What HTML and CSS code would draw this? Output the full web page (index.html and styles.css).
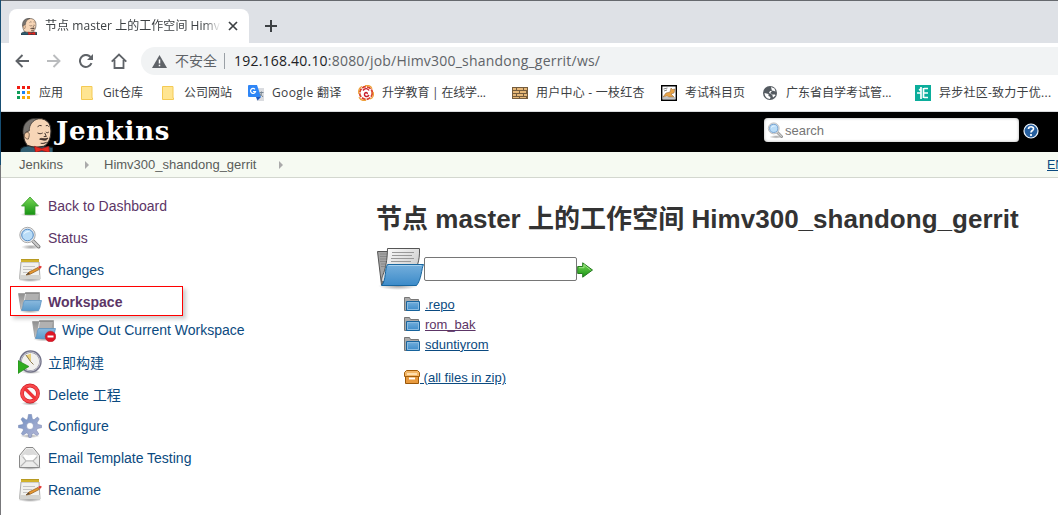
FILE: index.html
```
<!DOCTYPE html>
<html lang="zh-CN">
<head>
<meta charset="utf-8">
<title>节点 master 上的工作空间 Himv300_shandong_gerrit</title>
<link rel="stylesheet" href="styles.css">
</head>
<body>
<svg width="0" height="0" class="defs">
  <defs>
    <linearGradient id="gGreen" x2="0" y2="1"><stop stop-color="#7ad957"/><stop offset="1" stop-color="#179414"/></linearGradient>
    <linearGradient id="gBlue" x2="0" y2="1"><stop stop-color="#75afdc"/><stop offset="1" stop-color="#3c8bc9"/></linearGradient>
    <linearGradient id="gSoftBlue" x2="0" y2="1"><stop stop-color="#8ab9de"/><stop offset="1" stop-color="#5c9ccc"/></linearGradient>
    <linearGradient id="gGray" x2="0" y2="1"><stop stop-color="#8c8c8c"/><stop offset="1" stop-color="#c4c4c4"/></linearGradient>
    <linearGradient id="gPaper" x2="1" y2="1"><stop stop-color="#fff"/><stop offset="1" stop-color="#bdbdbd"/></linearGradient>
    <linearGradient id="gGear" x2="1" y2="1"><stop stop-color="#6d8ec2"/><stop offset="1" stop-color="#b9b9d6"/></linearGradient>
    <radialGradient id="gShade"><stop stop-color="#777" stop-opacity=".7"/><stop offset="1" stop-color="#777" stop-opacity="0"/></radialGradient>
    <symbol id="butler" viewBox="0 0 32 34">
      <path d="M0 34c0-4 1-5 6-6l8-2 10 2 8 1v5z" fill="#315d70" stroke="#111b20"/>
      <path d="M7 27C4 23 3 18 4 14l2-6C9 2 14 1 20 1c7 1 10 6 10 12 0 7-2 12-7 15-5 1-12 1-16-1z" fill="#f7d6b7" stroke="#332d29"/>
      <path d="M3 16C2 8 6 2 13 1l5 0C12 3 9 7 9 13l-3 1-1 4z" fill="#77736f" stroke="#302e2d" stroke-width=".7"/>
      <path d="M5 15c4-2 5 1 3 6-3 0-5-3-3-6z" fill="#efc7a3" stroke="#4b3b31" stroke-width=".7"/>
      <path d="M17 9q2-2 4-1M25 8q2-1 3 1M17 15c2 1 3 1 5 0M25 14c1 1 2 1 3 0M24 15l1.500 3.500h-2.500" fill="none" stroke="#3a2c26" stroke-width=".9"/>
      <path d="M19 21c2-2 4 1 8-1-1 3-4 2-8 1zM20 25q3 1 6-1" fill="#4e3b33" stroke="#3a2c26" stroke-width=".8"/>
      <path d="M14 28l7 2 7-2 .5 6-7.500-2-6 2z" fill="#e8281f" stroke="#8e1916" stroke-width=".7"/>
    </symbol>
    <symbol id="magnifier" viewBox="0 0 24 24">
      <ellipse cx="13" cy="21" rx="10" ry="2.5" fill="url(#gShade)"/>
      <path d="M14.5 14.5l6.2 6.2" stroke="#777" stroke-width="3.6" stroke-linecap="round"/><path d="M15 15l5.5 5.5" stroke="#ccc" stroke-width="2" stroke-linecap="round"/>
      <circle cx="9.5" cy="9" r="7.7" fill="#eee" stroke="#aaa"/><circle cx="9.5" cy="9" r="5.8" fill="#b9dcf7" stroke="#4f88c4"/><path d="M5.3 9c1-4 5-5 7-3-4 0-5 1-7 3z" fill="#e8f5ff"/>
    </symbol>
    <symbol id="notepad" viewBox="0 0 24 24">
      <ellipse cx="12" cy="22" rx="12" ry="2" fill="url(#gShade)"/>
      <path d="M3 4h18l1 17H1.500z" fill="#f1f1ee" stroke="#aaa"/><path d="M2 17h20v4H1.500z" fill="#d4d4d0"/>
      <path d="M3 1h18v3H3z" fill="#d2b32c"/><path d="M3.500 1.500h17" stroke="#9c8118" stroke-dasharray="1 1"/>
      <path d="M5 8.500h12M5 11.500h9M5 14.500h6" stroke="#c4c4c4"/>
      <path d="M8 17l3-3 9-4.500 1.500 1.800-9.500 5z" fill="#e89a32" stroke="#8f5514" stroke-width=".7"/><path d="M8 17l3-2.500.8 1.500z" fill="#444"/><path d="M20 9l2-1.300 2 1-2 2.300z" fill="#e33b35"/>
    </symbol>
    <symbol id="folder" viewBox="0 0 48 42">
      <ellipse cx="21" cy="38" rx="20" ry="4" fill="url(#gShade)"/>
      <path d="M.5 3.500h12v20L4.500 37z" fill="#a4a4a4" stroke="#555"/><path d="M3 6h8M3 8.500h8M3 11h8M3 13.500h7M4 16h6M4 18.500h5" stroke="#888"/>
      <path d="M10.500.5h32c.5 13-3 20-7 26L5 34c-2-6 5-8 5.500-33.500z" fill="url(#gPaper)" stroke="#555"/>
      <path d="M15 4.500h22M15 7.500h20M14 10.500h23M14 13.500h20" stroke="#999"/>
      <path d="M10.500 16.500h36c-2 4-2 15-7 21h-35c5-5 3-17 6-21z" fill="url(#gBlue)" stroke="#17669f"/><path d="M11.500 17.500h33" stroke="#a7d0ed"/>
    </symbol>
    <symbol id="folder24" viewBox="0 0 24 24">
      <ellipse cx="12" cy="21" rx="11" ry="2.500" fill="url(#gShade)"/>
      <path d="M.5 3.500h6l1-1h14v10l-3 7H3z" fill="url(#gGray)" stroke="#999" stroke-width=".8"/><path d="M8 4h13l-2 9-13 5z" fill="#b1b1b1"/><path d="M7.500 4L5 19" stroke="#e5e5e5"/>
      <path d="M6.500 10.500h17c-1 3-1 7-3 10H3.500c2-3 1-7 3-10z" fill="url(#gSoftBlue)" stroke="#5a93c1" stroke-width=".8"/>
    </symbol>
    <symbol id="folder16" viewBox="0 0 16 16">
      <path d="M.5 14.500v-13h5l1 2h8v11z" fill="#aaa" stroke="#777"/><path d="M2.500 14.500v-9h13v9z" fill="url(#gBlue)" stroke="#17639c"/><path d="M3.500 13.500v-7h11v7z" fill="none" stroke="#8dbce0"/>
    </symbol>
  </defs>
</svg>
<div class="window">
  <div class="tabstrip">
    <div class="tab">
      <svg class="favicon" width="16" height="17"><use href="#butler"/></svg>
      <span class="tab-title">节点 master 上的工作空间 Himv</span>
      <svg class="close" width="10" height="10" viewBox="0 0 10 10"><path d="M1 1l8 8M9 1L1 9" stroke="#3c4043" stroke-width="1.700"/></svg>
    </div>
    <svg class="new-tab" width="12" height="12" viewBox="0 0 12 12"><path d="M6 0v12M0 6h12" stroke="#3c4043" stroke-width="2"/></svg>
  </div>
  <div class="toolbar">
    <svg width="14" height="14" viewBox="0 0 14 14"><path d="M14 7H1.500M7.500 1l-6 6 6 6" fill="none" stroke="#5f6368" stroke-width="1.900"/></svg>
    <svg width="14" height="14" viewBox="0 0 14 14"><path d="M0 7h12.500M6.500 1l6 6-6 6" fill="none" stroke="#babcbe" stroke-width="1.900"/></svg>
    <svg width="14" height="14" viewBox="0 0 14 14"><path d="M12.500 9.200A6 6 0 1 1 11.500 3" fill="none" stroke="#5f6368" stroke-width="2"/><path d="M14 0v6H8z" fill="#5f6368"/></svg>
    <svg width="16" height="16" viewBox="0 0 16 16"><path d="M.7 8.700L8 1.500l7.300 7.200M3.500 7v8H12.500V7" fill="none" stroke="#5f6368" stroke-width="1.800"/></svg>
    <div class="address">
      <svg width="15" height="13" viewBox="0 0 15 13"><path d="M7.500 0L15 13H0z" fill="#5f6368"/><path d="M7.500 4.500v4M7.500 9.800v1.500" stroke="#fff" stroke-width="1.500"/></svg>
      <span class="insecure">不安全</span><i class="divider"></i>
      <span class="url"><b>192.168.40.10</b>:8080/job/Himv300_shandong_gerrit/ws/</span>
    </div>
  </div>
  <div class="bookmarks">
    <div class="bookmark"><svg width="16" height="16" viewBox="0 0 16 16"><path d="M2 1h3v3H2zM7 1h3v3H7zM12 1h3v3h-3z" fill="#f01d12"/><path d="M2 6h3v3H2zM2 11h3v3H2z" fill="#0f9d58"/><path d="M7 6h3v3H7z" fill="#1a82f7"/><path d="M7 11h3v3H7zM12 6h3v3h-3zM12 11h3v3h-3z" fill="#f9a80b"/></svg><span>应用</span></div>
    <div class="bookmark"><svg width="16" height="16" viewBox="0 0 16 16"><path d="M2.500 1.500h10.500v11.500h.5v1.500h-11z" fill="#ffe591" stroke="#f4ca54"/></svg><span>Git仓库</span></div>
    <div class="bookmark"><svg width="16" height="16" viewBox="0 0 16 16"><path d="M2.500 1.500h10.500v11.500h.5v1.500h-11z" fill="#ffe591" stroke="#f4ca54"/></svg><span>公司网站</span></div>
    <div class="bookmark"><svg width="16" height="16" viewBox="0 0 16 16"><path d="M6 3h10v13H9z" fill="#dadce0"/><path d="M0 1q0-1 1-1h8l4 12H1q-1 0-1-1z" fill="#2f86f6"/><path d="M8 12h5l-3.500 3.500z" fill="#1c57c0"/><path d="M7 4.300A2.500 2.500 0 1 0 7.500 6.500H5" fill="none" stroke="#fff" stroke-width="1.200"/><path d="M11.500 7.500h4M13.500 6.500v1c0 2-1 3-2 4M12 8.500l3 3.500" fill="none" stroke="#788693"/></svg><span class="wide">Google 翻译</span></div>
    <div class="bookmark"><svg width="16" height="16" viewBox="0 0 16 16"><circle cx="8" cy="8" r="6.300" fill="none" stroke="#d9402b" stroke-width="1.800" stroke-dasharray="4 1"/><path d="M7 .8c4-1 6 0 7 3M15 7c1 3 0 6-3 7M8 15.200c-4 1-6-1-7-3M1 9C0 5 1 3 4 1.500" fill="none" stroke="#efa03a" stroke-width="1.300"/><path d="M5 5.500c2-3 5-2 6 0M11 10c-2 3-6 1-4-2 1-1 3 0 2 1" fill="none" stroke="#c91f2e" stroke-width="1.400"/></svg><span class="tight">升学教育 | 在线学...</span></div>
    <div class="bookmark"><svg width="16" height="16" viewBox="0 0 16 16"><path d="M0 2h16v12H0z" fill="#755c3d"/><path d="M1 3h3v2H1zM5 3h6v2H5zM12 3h3v2h-3zM1 6h6v2H1zM8 6h6v2H8zM1 9h3v2H1zM5 9h6v2H5zM12 9h3v2h-3zM1 12h6v1H1zM8 12h6v1H8z" fill="#e5b778"/></svg><span class="loose">用户中心 - 一枝红杏</span></div>
    <div class="bookmark"><svg width="16" height="16" viewBox="0 0 16 16"><path d="M.7.700h14.600v14.600H.700z" fill="#fff" stroke="#000" stroke-width="1.400"/><path d="M2 12l3-4 4-1 1-4 1.500 1.500L14 4l-1 4-3 1 3 3H8l-2-1z" fill="#e8a347" stroke="#87603b" stroke-width=".5"/><path d="M2.500 4l4-1M3 6l3-1M2 13h12" stroke="#888"/></svg><span>考试科目页</span></div>
    <div class="bookmark"><svg width="16" height="16" viewBox="0 0 16 16"><circle cx="8" cy="8" r="7" fill="#555b61"/><path d="M2.500 8l4 1v2l2 1-.5 2c-3 0-5.500-3-5.500-6zM9 2l3.500 1.500 1 3-3-1-2 2 1 2 3.500 0 .5 1-2.500 2-1-3.500-3-1 1-2 2 0z" fill="#fff"/></svg><span>广东省自学考试管...</span></div>
    <div class="bookmark"><svg width="16" height="16" viewBox="0 0 16 16"><path d="M0 0h16v16H0z" fill="#0bad9b"/><path d="M6 2v12M2 8h4M4 5l2-1M9 3.500h4M8 8h5M9 12.500h4M8.500 3v10" fill="none" stroke="#fff" stroke-width="1.700"/></svg><span class="loose">异步社区-致力于优...</span></div>
  </div>
  <header class="masthead">
    <svg class="logo-butler" width="33" height="36"><use href="#butler"/></svg>
    <span class="brand">Jenkins</span>
    <div class="search"><svg width="17" height="17"><use href="#magnifier"/></svg><span>search</span></div>
    <svg class="help" width="16" height="16" viewBox="0 0 16 16"><circle cx="8" cy="8" r="7" fill="#265f9f" stroke="#eef5fc" stroke-width="1.200"/><path d="M5.500 6c0-3 5.500-3 5 0-.2 1.600-2.500 1.500-2.500 3.500M8 11v2" fill="none" stroke="#fff" stroke-width="1.700"/></svg>
  </header>
  <nav class="breadcrumbs"><span class="crumb-root">Jenkins</span><i class="chevron"></i><span class="crumb-job">Himv300_shandong_gerrit</span><i class="chevron"></i><a class="refresh">EN</a></nav>
  <main class="content">
    <aside class="side">
      <a class="task visited"><svg viewBox="0 0 24 24"><ellipse cx="12" cy="20.500" rx="10" ry="2" fill="url(#gShade)"/><path d="M12 3l8.500 9H17v8.500H7V12H3.500z" fill="url(#gGreen)" stroke="#379b2c" stroke-width=".8"/></svg><span>Back to Dashboard</span></a>
      <a class="task visited"><svg><use href="#magnifier"/></svg><span>Status</span></a>
      <a class="task"><svg><use href="#notepad"/></svg><span>Changes</span></a>
      <div class="highlight"><a class="task visited current"><svg><use href="#folder24"/></svg><span>Workspace</span></a></div>
      <a class="task sub"><svg viewBox="0 0 24 24"><use href="#folder24"/><circle cx="18.500" cy="18.500" r="5.300" fill="#e01525" stroke="#b7202a" stroke-width=".6"/><path d="M15.500 18.500h6" stroke="#fff" stroke-width="2"/></svg><span>Wipe Out Current Workspace</span></a>
      <a class="task"><svg viewBox="0 0 24 24"><ellipse cx="13" cy="22" rx="10" ry="2" fill="url(#gShade)"/><circle cx="12.500" cy="11.500" r="10" fill="#f1f1ee" stroke="#74748a" stroke-width="2.400"/><circle cx="12.500" cy="11.500" r="9.500" fill="none" stroke="#c1c1cc"/><path d="M13 11.500L8 5.500l5-2z" fill="#ecd27c"/><path d="M8 5l4.500 6.500 3 3" fill="none" stroke="#8b7a4c"/><path d="M0 10.500l11 6-11 7z" fill="#2eac20" stroke="#20821a" stroke-width=".6"/></svg><span>立即构建</span></a>
      <a class="task"><svg viewBox="0 0 24 24"><ellipse cx="12" cy="21.500" rx="9" ry="2" fill="url(#gShade)"/><circle cx="12" cy="11.500" r="8" fill="#fafafa" stroke="#ce2028" stroke-width="3.800"/><circle cx="12" cy="11.500" r="8" fill="none" stroke="#f9484b" stroke-width="2.600"/><path d="M6.500 6l11 11" stroke="#ee3338" stroke-width="3.200"/></svg><span class="mixed">Delete 工程</span></a>
      <a class="task"><svg viewBox="0 0 24 24"><ellipse cx="12" cy="22" rx="10" ry="2" fill="url(#gShade)"/><path fill-rule="evenodd" d="M10.500.5h3l.8 4.500 1.700.8L19.500 3l1.700 2-2.200 3.800.5 1.600 4 .9v2.400l-4.200.8-.8 1.800 2.300 3.700-1.800 1.500-3.500-2.300-1.600.6-.8 3.700h-2.200l-.8-3.900-1.800-.6L5 21.300 3.300 19.700l2.200-3.600-.8-1.700-4.200-.7v-2.400l4.200-.7.700-1.600L3 5.200 4.800 3.500l3.400 2.400 1.500-.8zM12 8.500a3.500 3.500 0 1 0 0 7 3.500 3.500 0 0 0 0-7z" fill="url(#gGear)" stroke="#7c8bb5" stroke-width=".6"/></svg><span>Configure</span></a>
      <a class="task"><svg viewBox="0 0 24 24"><ellipse cx="12" cy="22" rx="12" ry="2" fill="url(#gShade)"/><path d="M1.500 9.500L8 1.500h7l6.500 8v12h-20z" fill="#ececeb" stroke="#898989"/><path d="M2.500 10L8.500 3h6l6 7-6 5h-6z" fill="#dadada"/><path d="M5 9.500l2-1c4 2 7-1 12 1l-3 4.500H8z" fill="#fff"/><path d="M2.500 20.500l5.500-5.500h7l5.500 5.500M5 11l3 4h7l4-4" fill="none" stroke="#b8b8b8" stroke-width="1.200"/></svg><span>Email Template Testing</span></a>
      <a class="task"><svg><use href="#notepad"/></svg><span>Rename</span></a>
    </aside>
    <section class="workspace">
      <h1>节点 master 上的工作空间 Himv300_shandong_gerrit</h1>
      <div class="path">
        <svg class="big-folder" width="48" height="42"><use href="#folder"/></svg><input type="text" class="path-input"><svg class="go" width="16" height="16" viewBox="0 0 16 16"><path d="M.7 4.500h5V.8l9.800 7.200-9.800 7.200v-3.700h-5z" fill="url(#gGreen)" stroke="#277a22"/><path d="M2 5.700h5v-3L13.500 8" fill="none" stroke="#9ae384"/></svg>
      </div>
      <ul class="files">
        <li><svg><use href="#folder16"/></svg><a>.repo</a></li>
        <li><svg><use href="#folder16"/></svg><a class="visited">rom_bak</a></li>
        <li><svg><use href="#folder16"/></svg><a>sduntiyrom</a></li>
        <li class="zip"><svg viewBox="0 0 16 16"><path d="M1.500 7.500h13v7h-13z" fill="#e89a3e" stroke="#9a5708"/><path d="M2.500 1.500h11l2 2v4H.500v-4z" fill="#f3b768" stroke="#a45e0a"/><path d="M3 4h10v2H3z" fill="#ffe0b0"/><path d="M5 9.500h6" stroke="#fff" stroke-width="2"/></svg><a>&nbsp;(all files in zip)</a></li>
      </ul>
    </section>
  </main>
</div>
</body>
</html>
```
FILE: styles.css
```
* { box-sizing: border-box; }
body {
  margin: 0; padding-left: 1px; overflow: hidden;
  background: linear-gradient(#174e73 0 165px, #77777a 165px 340px, #4c4152 340px 350px, #77777a 350px 515px);
}
svg { display: block; flex: none; }
.defs { position: absolute; }
.window {
  width: 1057px; height: 515px; overflow: hidden; background: #fff;
  border-top: 1px solid #66696e;
  font-family: "Liberation Sans", "Noto Sans CJK SC", sans-serif;
  color: #333;
}
.tabstrip { display: flex; align-items: flex-start; height: 42px; padding: 8px 0 0 8px; background: #dee1e6; }
.tab {
  display: flex; align-items: center; width: 240px; height: 34px; padding-left: 12px;
  background: #fff; border-radius: 8px 8px 0 0;
}
.tab-title {
  width: 176px; margin-left: 8px; overflow: hidden; white-space: nowrap;
  font: 12px/18px "Open Sans", "Noto Sans CJK SC", sans-serif; color: #3c4043;
  letter-spacing: .05px;
  -webkit-mask-image: linear-gradient(90deg, #000 90%, transparent);
  mask-image: linear-gradient(90deg, #000 90%, transparent);
}
.close { margin-left: 7px; }
.new-tab { margin: 11px 0 0 16px; }
.toolbar { display: flex; align-items: center; gap: 18px; height: 36px; padding-left: 14px; }
.address {
  display: flex; align-items: center; flex: 1; height: 28px; margin-left: -4px; padding-left: 11px;
  border-radius: 14px 0 0 14px; background: #f1f3f4;
  font: 14px/20px "Open Sans", "Noto Sans CJK SC", sans-serif; color: #5f6368;
}
.insecure { width: 42px; margin-left: 8px; white-space: nowrap; }
.divider { width: 1px; height: 16px; margin: 0 9px 0 7px; background: #9aa0a6; }
.url { white-space: nowrap; letter-spacing: .21px; }
.url b { font-weight: 400; color: #202124; }
.bookmarks {
  display: grid; grid-template-columns: 64px 81px 88px 110px 154px 149px 101px 153px 150px;
  align-items: center; height: 33px; padding: 0 0 4px 14px; border-bottom: 1px solid #d9dbde;
  font: 12px/18px "Open Sans", "Noto Sans CJK SC", sans-serif; color: #3c4043;
}
.bookmark { display: flex; align-items: center; gap: 8px; white-space: nowrap; }
.wide { letter-spacing: .35px; }
.tight { letter-spacing: -.2px; }
.loose { letter-spacing: .25px; }
.masthead { display: flex; height: 40px; padding-left: 19px; background: #000; overflow: hidden; }
.logo-butler { margin-top: 5px; }
.brand { width: 120px; margin-left: 3px; font: bold 26px/38px "DejaVu Serif", serif; letter-spacing: .7px; color: #fff; white-space: nowrap; }
.search {
  display: flex; align-items: center; gap: 1px; width: 255px; height: 24px; margin: 6px 4px 0 auto; padding-left: 3px;
  background: #fff; border-radius: 4px; box-shadow: inset 0 0 3px #aaa; font-size: 13px; color: #757575;
}
.help { margin: 11px 19px 0 0; }
.breadcrumbs {
  display: flex; align-items: center; height: 26px; padding-left: 18px;
  background: #f6faf2; border-bottom: 1px solid #d3d7cf; font-size: 13px; color: #5a5d5a;
}
.crumb-root { width: 66px; }
.crumb-job { width: 154px; margin-right: 21px; }
.chevron { border: 4px solid transparent; border-left-color: #aaa; border-right: 0; margin-right: 15px; }
.refresh { width: 11px; margin-left: auto; font-size: 12.500px; color: #0b4a80; text-decoration: underline; }
.content { display: flex; }
.side { width: 375px; padding-top: 12px; }
.task { display: flex; align-items: center; height: 32px; padding-left: 17px; gap: 6px; font-size: 14px; color: #0b4a80; white-space: nowrap; }
.task svg { width: 24px; height: 24px; }
.visited { color: #5c3566; }
.highlight { display: flex; align-items: center; width: 173px; height: 30px; margin: 0 0 1px 9px; border: 1px solid #f00; box-shadow: 3px 3px 4px #0003; }
.highlight .task { padding: 1px 0 0 7px; height: 29px; }
.current { font-weight: 700; }
.sub { height: 26px; padding-left: 31px; margin-bottom: 3px; }
.mixed { letter-spacing: .05px; }
.workspace { flex: 1; }
h1 { margin: 25px 0 0; font-size: 26px; line-height: 32px; height: 34px; color: #333; white-space: nowrap; letter-spacing: .03px; }
.path { display: flex; height: 46px; margin-top: 11px; }
.big-folder { margin: 0 -1px 0 1px; }
.path-input { width: 153px; height: 24px; margin: 9px 0 0; padding: 0; border: 1px solid #767676; border-radius: 2px; outline: 0; background: #fff; }
.go { margin-top: 14px; }
.files { margin: 0 0 0 28px; padding: 0; list-style: none; font-size: 13px; }
.files li { display: flex; align-items: center; height: 20px; }
.files svg { width: 16px; height: 16px; }
.files a { margin-left: 5px; color: #0b4a80; text-decoration: underline; }
.files a.visited { color: #5c3566; }
.files li.zip { margin-top: 13px; }
.files .zip a { margin-left: 0; }
```
